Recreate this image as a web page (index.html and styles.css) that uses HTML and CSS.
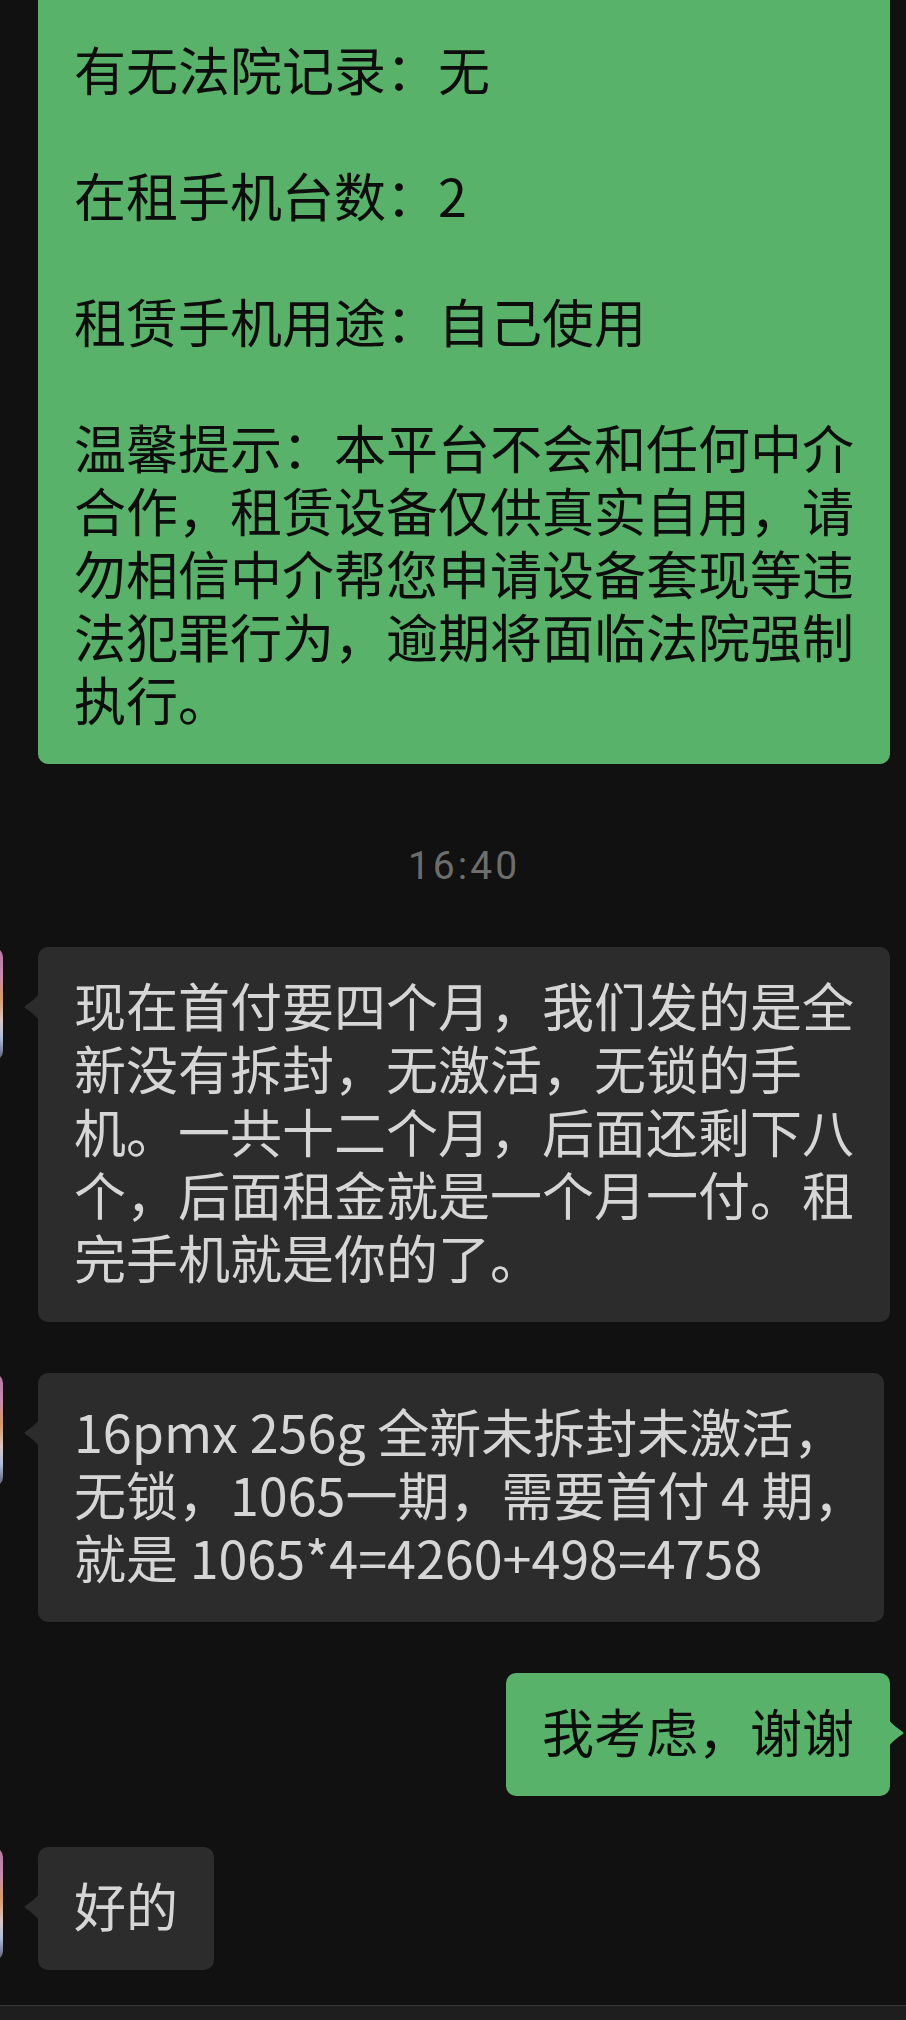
FILE: index.html
```html
<!DOCTYPE html>
<html lang="zh-CN">
<head>
    <meta charset="UTF-8">
    <meta name="viewport" content="width=device-width, initial-scale=1.0">
    <title>聊天</title>
    <link rel="stylesheet" href="styles.css">
</head>
<body>
<div class="chat">
    <div class="msg msg-out">
        <div class="bubble bubble-out bubble-clipped">有无法院记录：无<br><br>在租手机台数：2<br><br>租赁手机用途：自己使用<br><br>温馨提示：本平台不会和任何中介合作，租赁设备仅供真实自用，请勿相信中介帮您申请设备套现等违法犯罪行为，逾期将面临法院强制执行。</div>
    </div>

    <div class="time">16:40</div>

    <div class="msg msg-in">
        <div class="avatar"></div>
        <div class="bubble bubble-in">现在首付要四个月，我们发的是全新没有拆封，无激活，无锁的手机。一共十二个月，后面还剩下八个，后面租金就是一个月一付。租完手机就是你的了。</div>
    </div>
    <div class="msg msg-in">
        <div class="avatar"></div>
        <div class="bubble bubble-in bubble-nowrap">16pmx 256g 全新未拆封未激活，<br>无锁，1065一期，需要首付 4 期，<br>就是 1065*4=4260+498=4758</div>
    </div>
    <div class="msg msg-out">
        <div class="bubble bubble-out">我考虑，谢谢</div>
    </div>
    <div class="msg msg-in">
        <div class="avatar"></div>
        <div class="bubble bubble-in">好的</div>
    </div>
</div>
<div class="input-bar"></div>
</body>
</html>
```

FILE: styles.css
```css
/* Halaman */
* {
    box-sizing: border-box;
}

body {
    margin: 0;
    background: #111111;
    font-family: "Noto Sans CJK SC", sans-serif;
    overflow: hidden;
}

/* Daftar pesan */
.chat {
    padding-right: 16px;
}

.msg {
    display: flex;
    align-items: flex-start;
}

.msg + .msg {
    margin-top: 51px;
}

.msg-in {
    justify-content: flex-start;
}

.msg-out {
    justify-content: flex-end;
}

.avatar {
    flex: none;
    width: 114px;
    height: 114px;
    margin-left: -111px;
    margin-right: 35px;
    border-radius: 10px;
    background: linear-gradient(to bottom, #b5779f 0%, #c98ab0 25%, #d99a62 45%, #d8c6c8 65%, #aebdd6 80%, #55566a 100%);
}

/* Gelembung */
.bubble {
    position: relative;
    max-width: 852px;
    padding: 26px 36px 34px;
    border-radius: 10px;
    font-size: 52px;
    line-height: 63px;
}

.bubble-in {
    background: #2c2c2c;
    color: #d6d6d6;
}

.bubble-out {
    background: #59b26a;
    color: #0d0d0d;
}

.bubble-in::before,
.bubble-out::before {
    content: "";
    position: absolute;
    top: 47px;
    width: 16px;
    height: 26px;
    background: inherit;
}

.bubble-in::before {
    left: -15px;
    clip-path: path("M16 0 L16 26 C13 22 8 18 2.5 14.3 Q0.5 13 2.5 11.7 C8 8 13 4 16 0 Z");
}

.bubble-out::before {
    right: -15px;
    clip-path: path("M0 0 L0 26 C3 22 8 18 13.5 14.3 Q15.5 13 13.5 11.7 C8 8 3 4 0 0 Z");
}

.bubble-clipped {
    margin-top: -40px;
    padding-top: 77px;
}

.bubble-clipped::before {
    display: none;
}

.bubble-nowrap {
    max-width: 846px;
    white-space: nowrap;
}

.time {
    margin: 77px 0 56px;
    padding-left: 38px;
    text-align: center;
    font-family: Roboto, sans-serif;
    font-size: 39px;
    line-height: 50px;
    letter-spacing: 3px;
    color: #6d6d6d;
}

.input-bar {
    margin-top: 35px;
    height: 80px;
    background: #1e1e1e;
    border-top: 1px solid #383838;
}
```
